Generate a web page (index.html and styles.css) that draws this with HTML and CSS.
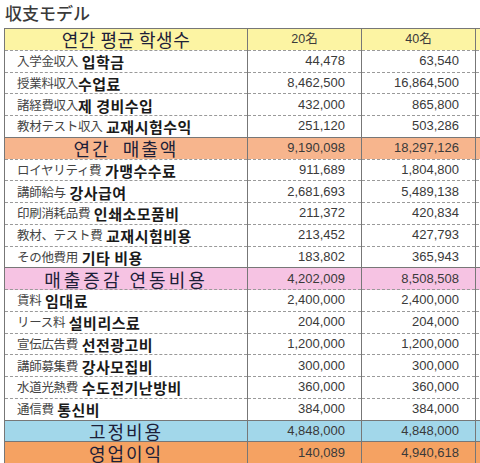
FILE: index.html
```html
<!DOCTYPE html>
<html lang="ja">
<head>
<meta charset="UTF-8" />
<title>収支モデル</title>
<link rel="stylesheet" href="styles.css">
</head>
<body>

<h1 class="title">収支モデル</h1>

<table class="model">
  <colgroup>
    <col class="c-label"><col class="c-num"><col class="c-num"><col class="c-extra">
  </colgroup>
  <tr class="row-head">
    <td class="big">연간 평균 학생수</td><td class="mid">20名</td><td class="mid">40名</td><td></td>
  </tr>
  <tr><td><span class="jp">入学金収入</span> <span class="kr">입학금</span></td><td>44,478</td><td>63,540</td><td></td></tr>
  <tr><td><span class="jp">授業料収入</span><span class="kr">수업료</span></td><td>8,462,500</td><td>16,864,500</td><td></td></tr>
  <tr><td><span class="jp">諸経費収入</span><span class="kr">제 경비수입</span></td><td>432,000</td><td>865,800</td><td></td></tr>
  <tr><td><span class="jp">教材テスト収入</span> <span class="kr">교재시험수익</span></td><td>251,120</td><td>503,286</td><td></td></tr>
  <tr class="row-sales">
    <td class="big">연간 &nbsp;매출액</td><td>9,190,098</td><td>18,297,126</td><td></td>
  </tr>
  <tr><td><span class="jp">ロイヤリティ費</span> <span class="kr">가맹수수료</span></td><td>911,689</td><td>1,804,800</td><td></td></tr>
  <tr><td><span class="jp">講師給与</span> <span class="kr">강사급여</span></td><td>2,681,693</td><td>5,489,138</td><td></td></tr>
  <tr><td><span class="jp">印刷消耗品費</span> <span class="kr">인쇄소모품비</span></td><td>211,372</td><td>420,834</td><td></td></tr>
  <tr><td><span class="jp">教材、テスト費</span> <span class="kr">교재시험비용</span></td><td>213,452</td><td>427,793</td><td></td></tr>
  <tr><td><span class="jp">その他費用</span> <span class="kr">기타 비용</span></td><td>183,802</td><td>365,943</td><td></td></tr>
  <tr class="row-var">
    <td class="big">매출증감 연동비용</td><td>4,202,009</td><td>8,508,508</td><td></td>
  </tr>
  <tr><td><span class="jp">賃料</span> <span class="kr">임대료</span></td><td>2,400,000</td><td>2,400,000</td><td></td></tr>
  <tr><td><span class="jp">リース料</span> <span class="kr">설비리스료</span></td><td>204,000</td><td>204,000</td><td></td></tr>
  <tr><td><span class="jp">宣伝広告費</span> <span class="kr">선전광고비</span></td><td>1,200,000</td><td>1,200,000</td><td></td></tr>
  <tr><td><span class="jp">講師募集費</span> <span class="kr">강사모집비</span></td><td>300,000</td><td>300,000</td><td></td></tr>
  <tr><td><span class="jp">水道光熱費</span> <span class="kr">수도전기난방비</span></td><td>360,000</td><td>360,000</td><td></td></tr>
  <tr><td><span class="jp">通信費</span> <span class="kr">통신비</span></td><td>384,000</td><td>384,000</td><td></td></tr>
  <tr class="row-fixed">
    <td class="big">고정비용</td><td>4,848,000</td><td>4,848,000</td><td></td>
  </tr>
  <tr class="row-profit">
    <td class="big">영업이익</td><td>140,089</td><td>4,940,618</td><td></td>
  </tr>
</table>

</body>
</html>
```

FILE: styles.css
```css
body {
  margin: 0;
  background: #fff;
  font-family: 'Noto Sans CJK JP', 'Noto Sans CJK KR', sans-serif;
  color: #333;
  overflow: hidden;
}
.title {
  margin: 0;
  padding: 2px 0 0 5px;
  height: 26px;
  font-size: 17px;
  font-weight: 500;
  line-height: 22px;
  color: #3a3a3a;
}
.model {
  margin-left: 4px;
  border-collapse: collapse;
  table-layout: fixed;
  width: 600px;
}
.c-label { width: 243px; }
.c-num { width: 114px; }
.c-extra { width: 129px; }

.model tr {
  height: 21.75px;
  border-bottom: 1px dashed #9a9a9a;
}
.model td {
  padding: 0 16px 0 0;
  border-left: 1px solid #777;
  border-right: 1px solid #777;
  font-family: 'Liberation Sans', Arial, sans-serif;
  font-size: 13px;
  line-height: 18px;
  color: #3a3a3a;
  text-align: right;
  white-space: nowrap;
}
.model td:first-child {
  padding: 0 0 0 12px;
  text-align: left;
}
.jp, .kr {
  line-height: 1;
  vertical-align: middle;
}
.jp {
  font-family: 'Noto Sans CJK JP', sans-serif;
  font-size: 12.5px;
  color: #444;
  letter-spacing: -0.3px;
}
.kr {
  font-family: 'Noto Sans CJK KR', sans-serif;
  font-size: 15px;
  font-weight: 700;
  color: #1a1a1a;
  letter-spacing: 0.5px;
}

/* colored summary rows */
.row-head, .row-sales, .row-var, .row-fixed, .row-profit {
  border-top: 1px solid #777;
  border-bottom: 1px solid #777;
}
.model td.big {
  padding: 0;
  text-align: center;
  font-family: 'Noto Sans CJK KR', sans-serif;
  font-size: 18px;
  font-weight: 400;
  line-height: 20px;
  letter-spacing: 2px;
  color: #1d2038;
}
.model td.mid {
  padding: 0;
  text-align: center;
  font-family: 'Liberation Sans', 'Noto Sans CJK JP', sans-serif;
  font-size: 12.5px;
}
.row-head { background: #fcf4a3; }
.row-sales { background: #f7b58d; }
.row-var { background: #f6c3e3; }
.row-fixed { background: #a2d7ea; }
.row-profit { background: #f5a262; }
.row-head td.big { letter-spacing: 0.5px; }
.row-var td.big { letter-spacing: 3px; }
```
